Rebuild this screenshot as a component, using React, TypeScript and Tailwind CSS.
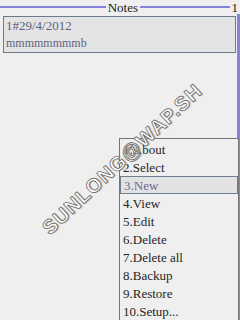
import React from 'react';

const menuItems = ['1.About', '2.Select', '3.New', '4.View', '5.Edit', '6.Delete', '7.Delete all', '8.Backup', '9.Restore', '10.Setup...'];

const MenuRow: React.FC<{ label: string; active: boolean }> = ({ label, active }) => (
    <div
        className={`h-[18px] flex items-center leading-none font-normal ${
            active ? 'bg-[#e2e2e2] border border-[#6f7f8f] text-[#6a6a98] -mx-[1px] pl-[3px]' : 'text-[#262626] pl-[2px]'
        }`}
    >
        {label}
    </div>
);

export default function App() {
    return (
        <div className="relative w-[240px] h-[320px] overflow-hidden bg-[#eeefee] font-['Liberation_Serif',serif] text-[13px]">
            {/* title bar */}
            <div className="flex items-center h-[14px]">
                <div className="flex-1 h-[2px] bg-[#8683de]" />
                <span className="px-[2px] leading-none text-[#1c1c1c]">Notes</span>
                <div className="w-[90px] h-[2px] bg-[#8683de]" />
                <span className="w-[10px] text-right pr-[2px] leading-none text-[#1c1c1c]">1</span>
            </div>

            <div className="flex h-[306px]">
                <div className="flex-1 pl-[3px] pr-[1px] pt-[2px]">
                    <div className="h-[37px] border border-[#6b7b8b] bg-[#e4e4e4] px-[2px] text-[#62627f]">
                        <div className="h-[17px] flex items-center leading-none">1#29/4/2012</div>
                        <div className="h-[17px] flex items-center leading-none text-[12px]">mmmmmmmmb</div>
                    </div>
                </div>
                <div className="w-[3px] bg-[#8683de]" />
            </div>

            {/* popup menu */}
            <div className="absolute left-[119px] top-[138px] w-[120px] h-[190px] border border-[#747474] bg-[#eeefee] pt-[1px] px-[1px]">
                {menuItems.map(item => (
                    <MenuRow key={item} label={item} active={item === '3.New'} />
                ))}
            </div>

            {/* watermark, drawn over the menu */}
            <div className="absolute left-[-3px] top-[147px] w-[250px] text-center leading-[24px] -rotate-[43deg] font-['Liberation_Sans',sans-serif] font-bold text-[20px] tracking-[1px] text-[#fbfbfb] [-webkit-text-stroke:0.7px_#5a5a5a] [text-shadow:1px_1px_1px_#aaa] pointer-events-none">
                SUNLONG@WAP.SH
            </div>
        </div>
    );
}
